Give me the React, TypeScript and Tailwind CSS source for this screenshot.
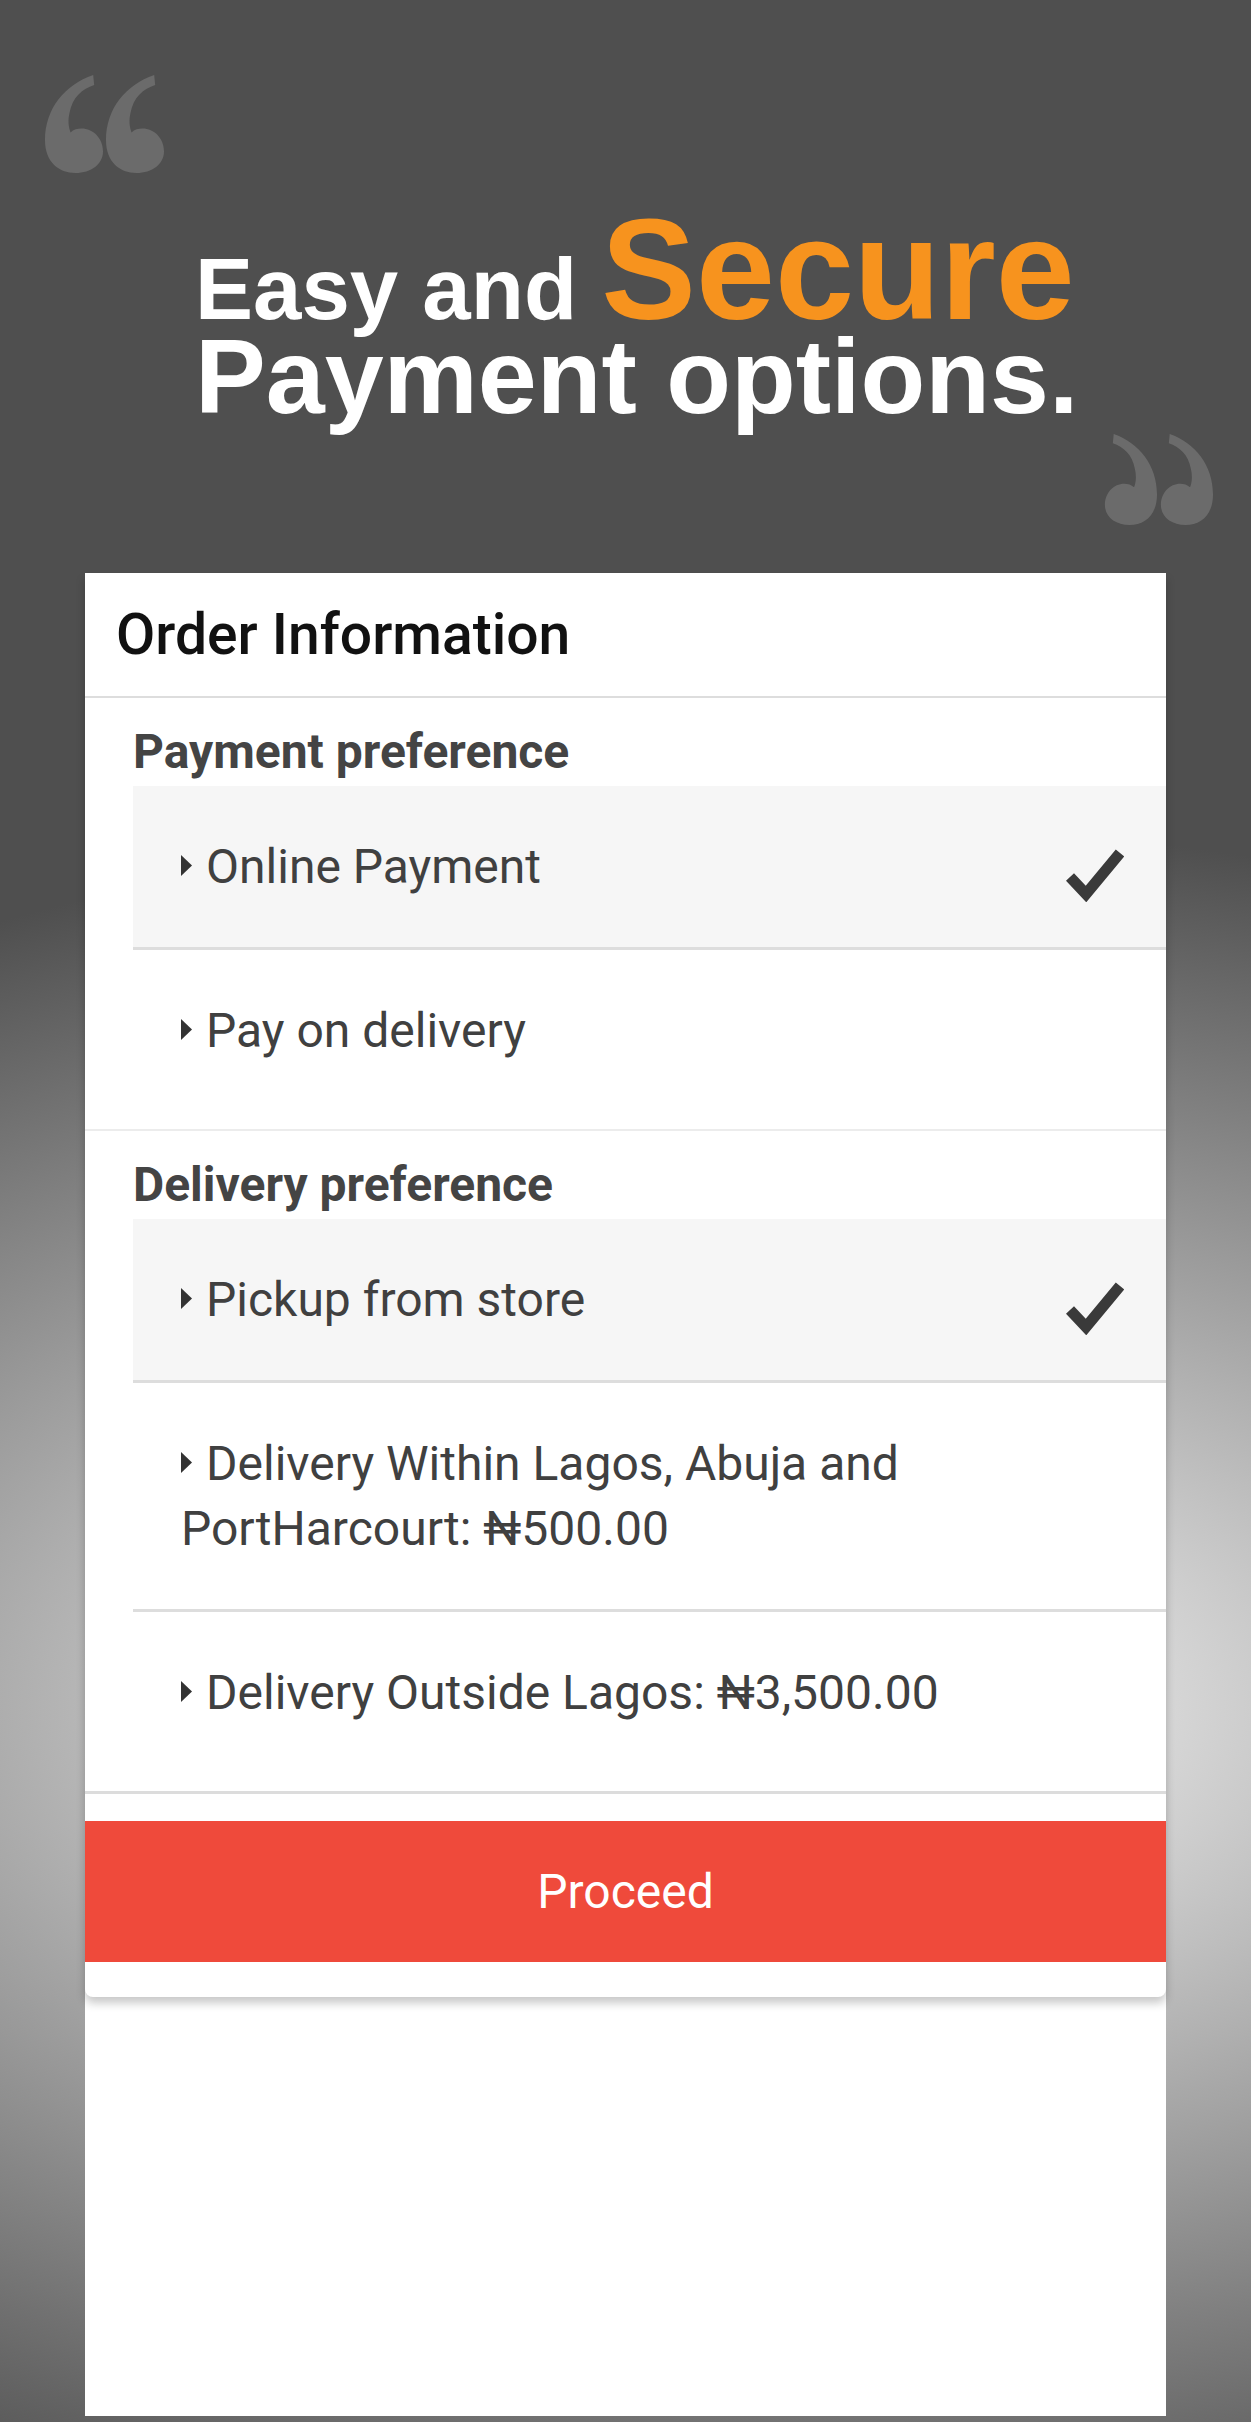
const paymentOptions = [
  { label: "Online Payment", selected: true },
  { label: "Pay on delivery", selected: false },
];

const deliveryOptions = [
  { label: "Pickup from store", selected: true },
  { label: "Delivery Within Lagos, Abuja and PortHarcourt: ₦500.00", selected: false },
  { label: "Delivery Outside Lagos: ₦3,500.00", selected: false },
];

const QuoteMark = ({ w, h, flip }: { w: number; h: number; flip?: boolean }) => (
  <svg
    width={w}
    height={h}
    viewBox="0 0 60 100"
    preserveAspectRatio="none"
    className={flip ? "-scale-x-100" : ""}
  >
    <path
      d="M49 0 L50 10 C38 14 28 22 25 38 C23 46 24 53 26 58 C29 55 33 54 37 54 C49 54 59 64 59 77 C59 90 47 99 31 99 C14 99 0 88 0 66 C0 34 20 10 49 0 Z"
      fill="#6b6b6b"
    />
  </svg>
);

const Caret = () => (
  <svg width="11" height="21" viewBox="0 0 11 21" className="mr-[14px] inline-block align-[7px]">
    <polygon points="0,0 11,10.5 0,21" fill="#333333" />
  </svg>
);

const Check = () => (
  <svg width="58" height="53" viewBox="0 0 58 53" className="shrink-0 translate-y-[9px]">
    <polyline
      points="4,28 20,45 54,4"
      fill="none"
      stroke="#3a3a3a"
      strokeWidth="11"
      strokeLinejoin="miter"
    />
  </svg>
);

type Option = { label: string; selected: boolean };

const PreferenceSection = ({
  title,
  options,
  border,
}: {
  title: string;
  options: Option[];
  border: string;
}) => (
  <div className={`pb-[18px] pl-[48px] pt-[26px] ${border}`}>
    <h2 className="mb-[6px] text-[48px] font-bold leading-[56px] text-[#444444]">{title}</h2>
    {options.map((option, index) => (
      <div
        key={index}
        className={`flex items-center py-[48px] pl-[48px] pr-[42px] ${
          option.selected ? "bg-[#f6f6f6]" : ""
        } ${index < options.length - 1 ? "border-b-[3px] border-[#dddddd]" : ""}`}
      >
        <p className="flex-1 text-[48px] leading-[65px] text-[#404040]">
          <Caret />
          {option.label}
        </p>
        {option.selected && <Check />}
      </div>
    ))}
  </div>
);

const App = () => {
  return (
    <div className="min-h-[2422px] w-full bg-[radial-gradient(ellipse_1676px_890px_at_776px_1710px,#ffffff_0%,#4f4f4f_100%)] font-['Roboto',sans-serif]">
      {/* hero banner */}
      <section className="flex h-[534px] flex-col bg-[#4f4f4f] pt-[75px]">
        <div className="flex gap-[2px] pl-[45px]">
          <QuoteMark w={59} h={99} />
          <QuoteMark w={59} h={99} />
        </div>
        <h1 className="mt-[46px] pl-[195px] font-['Liberation_Sans',Arial,sans-serif] font-bold text-white">
          <div className="text-[87px] leading-[100px]">
            Easy and <span className="text-[142px] leading-[100px] text-[#f7931e]">Secure</span>
          </div>
          <div className="text-[106px] leading-[74px]">Payment options.</div>
        </h1>
        <div className="mt-[21px] flex justify-end gap-[3px] pr-[38px]">
          <QuoteMark w={53} h={92} flip />
          <QuoteMark w={53} h={92} flip />
        </div>
      </section>

      <div className="mx-[85px] mt-[39px] h-[1843px] bg-white">
        <div className="rounded-b-[8px] bg-white shadow-[0_6px_10px_rgba(0,0,0,0.22)]">
          <div className="h-[125px] border-b-2 border-[#dddddd] pl-[31px] text-[57px] font-medium leading-[123px] text-[#111111]">
            Order Information
          </div>

          <PreferenceSection
            title="Payment preference"
            options={paymentOptions}
            border="border-b-2 border-[#ececec]"
          />
          <PreferenceSection
            title="Delivery preference"
            options={deliveryOptions}
            border="border-b-[3px] border-[#dcdcdc]"
          />

          <div className="pb-[35px] pt-[27px]">
            <button className="h-[141px] w-full bg-[#ef4a3b] text-[48px] text-white">Proceed</button>
          </div>
        </div>
      </div>
    </div>
  );
};

export default App;
